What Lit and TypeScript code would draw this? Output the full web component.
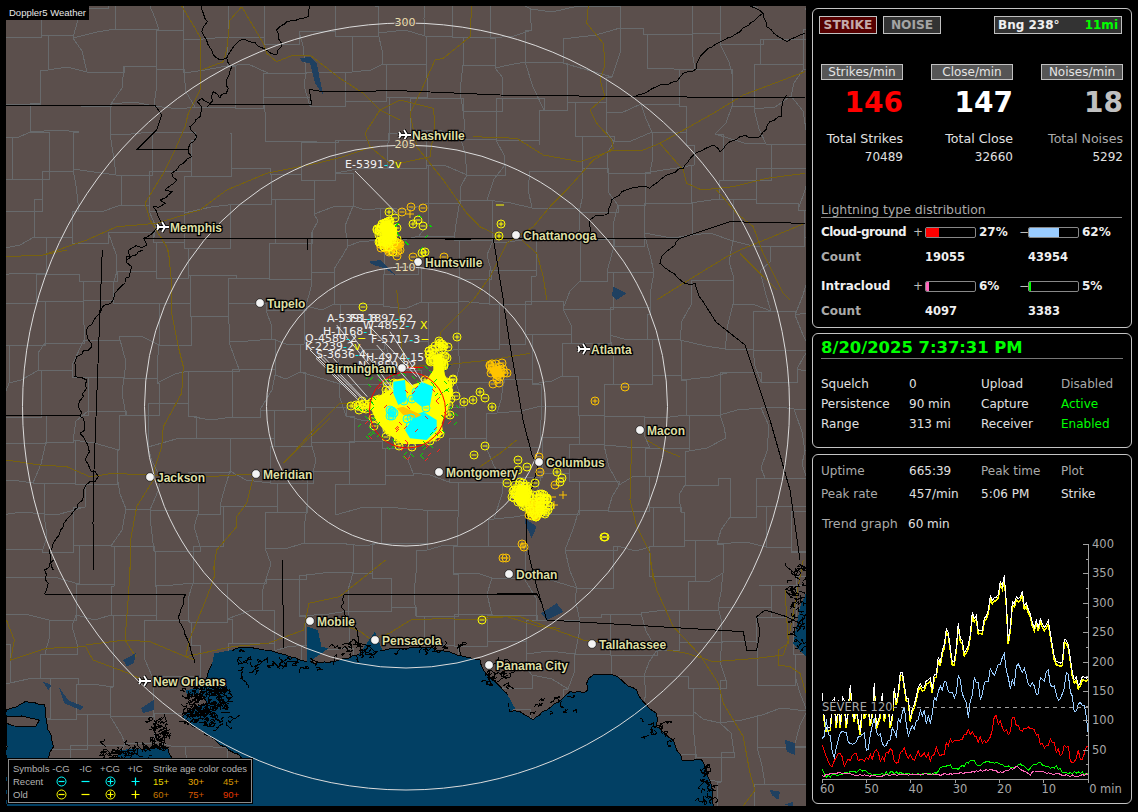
import { LitElement, html, css, svg } from 'lit';
import { customElement } from 'lit/decorators.js';

type Pt = [number, number];

// seeded random so the picture stays the same between runs
function rng(seed: number) {
  let s = seed;
  return () => {
    s = (s * 1664525 + 1013904223) % 4294967296;
    return s / 4294967296;
  };
}

// coordinates were read off crops of the screenshot, so each list keeps its crop origin and scale
function line(ox: number, oy: number, sx: number, sy: number, flat: number[], close = false) {
  let d = '';
  for (let i = 0; i < flat.length; i += 2) {
    const x = (ox + flat[i] / sx).toFixed(1);
    const y = (oy + flat[i + 1] / sy).toFixed(1);
    d += (i === 0 ? 'M' : 'L') + x + ' ' + y;
  }
  return d + (close ? 'Z' : '');
}
const z7 = (f: number[], c = false) => line(0, 0, 3, 3, f, c);
const z11 = (f: number[], c = false) => line(400, 0, 3, 3, f, c);
const z12 = (f: number[], c = false) => line(0, 250, 3, 3, f, c);
const z9 = (f: number[], c = false) => line(0, 560, 2.8, 3, f, c);
const z10 = (f: number[], c = false) => line(480, 560, 3, 3, f, c);
const z5 = (f: number[], c = false) => line(290, 290, 3, 3, f, c);
const z6 = (f: number[], c = false) => line(340, 110, 3, 3, f, c);
const z8 = (f: number[], c = false) => line(480, 440, 3, 3, f, c);

// rivers and shores: break each segment up and shake the points a little
function wig(flat: number[], amp: number, seed = 3) {
  const r = rng(seed);
  const out: number[] = [flat[0], flat[1]];
  for (let i = 2; i < flat.length; i += 2) {
    const dx = flat[i] - flat[i - 2];
    const dy = flat[i + 1] - flat[i - 1];
    const n = Math.max(1, Math.round(Math.hypot(dx, dy) / 14));
    for (let k = 1; k <= n; k++) {
      const j = k === n ? 0 : amp;
      out.push(flat[i - 2] + (dx * k) / n + (r() - 0.5) * 2 * j, flat[i - 1] + (dy * k) / n + (r() - 0.5) * 2 * j);
    }
  }
  return out;
}

const STATES = [
  z7(wig([605,18,610,40,622,65,605,95,620,120,640,165,660,180,680,175,715,125,735,118,790,145,830,165,845,130,830,90,860,65,925,50,930,18], 4)),
  z7(wig([680,175,695,200,680,240,685,265,660,295,640,275,630,310,605,295,592,305,605,320,600,350,570,380,590,410,565,445,575,470,550,490,515,520,530,540,495,570,515,575,480,600,495,610,460,620,475,650,490,680,430,715,440,735,395,745,380,780], 6)),
  z7([620,322,630,313,935,315,928,268,970,275,1200,272]),
  z7([18,316,465,316,485,345,470,390,412,448,565,448]),
  z11([0,272,300,285,700,290,1215,293]),
  z7([430,715,1200,715]),
  z11([0,715,840,715,930,685,990,665,1215,670]),
  z11([135,717,212,717]),
  z11(wig([840,715,785,770,780,790,855,850,885,850,905,900], 4)),
  'M702 300L716 322L745 345L770 420L790 490L800 560',
  z11([280,715,310,900]),
  'M503 300L510 345L523 420L532 455L538 466L526 510L527 545L530 560',
  z10([150,0,170,80,185,130,200,180,790,215,800,270,830,270,840,215,830,170,855,150,920,170,960,190]),
  z10([0,103,170,100,185,130]),
  z9(wig([965,102,955,140,1000,210,1005,250,1040,255], 4)),
  z9([965,102,1505,102]),
  z12([307,0,282,660,279,820,282,960]),
  'M307 238L307 250',
  z9([790,0,795,265]),
  z9(wig([125,102,520,102], 0).concat(wig([520,102,500,170,530,250,545,310], 4))),
  z12(wig([430,0,380,20,395,50,375,100,345,130,300,190,260,240,275,290,230,320,225,380,260,390,250,440,235,470,240,500,255,520,240,550,265,590,255,630,295,680,250,720,235,760,190,830,160,880,150,930,160,960], 7)),
  z9(wig([150,0,125,30,135,70,125,102], 5)),
  z12([18,495,240,495]),
  z11(wig([570,715,570,660,590,645,625,640,635,600,665,575,720,560,750,565,800,525,850,505,880,465,940,435,960,455,990,425,1020,410,1080,410,1110,365,1145,350,1150,300,1160,285], 4)),
  z11(wig([705,290,780,255,830,245,850,220,890,205,895,180,925,145,1020,95,1090,40,1050,18], 4)),
  z11(wig([1090,40,1100,80,1160,125,1215,100], 3)),
];

const ROADS = [
  z7([545,18,600,110,600,270,565,340,555,380,525,450,490,520,435,610,450,660,500,740,510,780]),
  z7([725,20,690,60,680,150,670,185,605,210]),
  z7([725,20,790,130,800,160,830,185,880,165,930,165,1020,235,1090,280,1140,330,1200,360]),
  z7([1200,300,1140,330,1095,400,1110,440,1170,490,1200,480]),
  z7([18,770,130,765,260,720,350,680,470,670,600,630,680,570,800,520,950,490,1030,470,1120,440]),
  z11([565,18,560,70,610,130,615,195,600,240,615,290,570,330,590,370,635,420,640,445,580,480,500,570,450,620,400,680,320,730,270,830,220,900]),
  z11([0,300,100,325,105,370,90,470,0,490]),
  z11([215,18,210,110,130,175,105,180,60,280,30,340,50,440,130,540,200,640,240,680,320,720]),
  z11([220,410,350,415,430,465,540,485,640,450,730,450,780,430,940,340,1030,285,1215,215]),
  z11([780,430,810,465,850,510,860,550,905,570,1000,560,1100,535,1215,520]),
  z11([950,570,1010,640,1060,680,1085,750,1150,880,1170,900]),
  z11([770,900,850,850,980,770,1020,750,1215,670]),
  z11([1020,760,1130,870]),
  z11([365,720,410,760,430,830,440,900]),
  z12([505,0,515,100,515,190,535,290,550,350,545,430,490,530,485,590,465,650,460,690,410,770,390,880,390,960]),
  z12([18,630,120,645,200,650,270,680,340,670,440,675,620,680,760,672]),
  z12([760,680,740,760,710,800,710,830,650,900,640,960]),
  z12([850,640,900,590,990,505]),
  z12([18,20,130,15,200,0]),
  z5([320,0,330,100,340,230,460,225,600,210,720,190]),
  z5([0,500,70,420,150,340,240,340]),
  z5([550,30,450,130,470,200]),
  z8([0,80,60,40,110,0]),
  z8([455,0,450,180,470,260,510,340,520,420]),
  z8([500,0,550,30,600,50]),
  z10([510,0,530,90,580,200,660,285,715,370,730,430,790,530,810,640,825,690,790,738]),
  z10([0,170,120,170,200,200,310,240,400,250]),
  z10([560,270,620,280,700,305,830,295,910,285,925,240,960,50,970,0]),
  z10([915,90,925,250,895,270,895,315,930,320,960,340,978,400]),
  z9([365,0,360,100,350,240,380,290]),
  z9([600,0,600,50,580,110,530,240,520,290,545,300]),
  z9([18,180,40,240,30,300,130,265,240,260,260,300,360,340,400,360]),
  z9([240,255,350,240,420,245,520,290,650,260,750,250,850,210,865,130,950,110,1080,0]),
  z9([940,185,1010,215,1040,240,1090,220,1150,180,1250,175,1300,180,1420,170,1510,200,1568,205]),
];

// the gulf, walked from the florida side round to the louisiana side and along the bottom edge
const SEA = 'M713 806' +
  z10(wig([700,738,695,680,665,600,605,600,580,540,530,500,530,460,490,425,470,390,400,345,340,345,320,370,320,395,270,395,200,450,160,480,120,455,90,455,80,400,40,360,10,330,0,300], 3, 8)).replace('M', 'L') +
  z9(wig([1280,285,1200,262,1100,265,1000,285,950,300,880,310,800,285,740,270,680,262,620,280,590,320,580,350,560,400,580,430,530,450,510,470,540,500,590,530,640,570,690,600,480,600,470,565,430,560,350,590,130,600,150,560,130,480,125,435,70,425,18,450,18,738], 3, 9)).replace('M', 'L') +
  'Z';

const LAKES = [
  z7([900,175,930,170,950,190,960,240,970,285,945,250,930,190,905,185], true),
  z6([85,455,120,450,165,495,135,475,100,465], true),
  z11([640,860,680,880,650,900,636,885], true),
  z8([135,235,170,260,155,295,135,250], true),
  z5([470,225,485,225,460,250], true),
  z9([345,300,380,280,375,310,355,320], true),
  z9([120,365,145,375,135,390], true),
  z9([165,380,190,420,235,440,225,450,180,430], true),
  z9([395,445,430,420,430,450,400,460], true),
  z10([183,160,230,130,250,155,200,180], true),
  z10([915,540,945,550,945,585,920,575], true),
  z10([870,690,900,695,895,720,875,705], true),
  z10([910,735,940,725,940,738], true),
];

const BAYS = [
  z9([860,200,890,210,900,260,920,265,860,310], true),
  z9([1050,215,1070,270,1000,290], true),
  z9([520,390,560,385,555,405,525,408], true),
  z9([600,280,650,270,620,320,590,330], true),
  z9([330,570,410,565,420,600,330,600], true),
  z10([960,140,978,100,978,290,940,250], true),
  z10([80,400,105,445,90,455], true),
  z10([200,450,270,415,215,455], true),
];

// the sliver of louisiana that sits in the water left of the legend
const ISLAND = z9([18,470,60,468,110,480,100,500,40,498,18,490], true);

function countyGrid() {
  const r = rng(11);
  const cols = 22, rows = 24, w = 38, h = 34;
  const v: Pt[][] = [];
  for (let j = 0; j <= rows; j++) {
    v[j] = [];
    for (let i = 0; i <= cols; i++) {
      v[j][i] = [2 + i * w + (r() - 0.5) * 20, 2 + j * h + (r() - 0.5) * 16];
    }
  }
  let d = '';
  const seg = (a: Pt, b: Pt) => {
    if (r() < 0.12) return;
    // county edges are mostly straight, some follow a creek
    if (r() < 0.35) {
      const mx = (a[0] + b[0]) / 2 + (r() - 0.5) * 10;
      const my = (a[1] + b[1]) / 2 + (r() - 0.5) * 10;
      d += `M${a[0].toFixed(0)} ${a[1].toFixed(0)}L${mx.toFixed(0)} ${my.toFixed(0)}L${b[0].toFixed(0)} ${b[1].toFixed(0)}`;
    } else {
      d += `M${a[0].toFixed(0)} ${a[1].toFixed(0)}L${b[0].toFixed(0)} ${a[1].toFixed(0)}L${b[0].toFixed(0)} ${b[1].toFixed(0)}`;
    }
  };
  for (let j = 0; j <= rows; j++) {
    for (let i = 0; i <= cols; i++) {
      if (i < cols) seg(v[j][i], v[j][i + 1]);
      if (j < rows) seg(v[j][i], v[j + 1][i]);
    }
  }
  return d;
}

// black marsh scribble along the delta and the gulf shore
function marsh() {
  const r = rng(5);
  const zones: [number, number, number, number, number][] = [
    [207, 705, 22, 20, 150],
    [159, 735, 9, 15, 50],
    [125, 752, 28, 6, 40],
    [245, 665, 6, 14, 8],
    [280, 665, 40, 3, 24],
    [355, 650, 22, 8, 24],
    [430, 647, 30, 3, 16],
    [495, 675, 16, 12, 24],
    [797, 610, 7, 46, 50],
    [708, 785, 6, 20, 24],
    [655, 735, 14, 14, 12],
    [560, 705, 30, 10, 12],
  ];
  let d = '';
  for (const [cx, cy, rx, ry, n] of zones) {
    for (let i = 0; i < n; i++) {
      let x = cx + (r() - 0.5) * 2 * rx;
      let y = cy + (r() - 0.5) * 2 * ry;
      d += `M${x.toFixed(0)} ${y.toFixed(0)}`;
      for (let k = 0; k < 5; k++) {
        x += (r() - 0.5) * 7;
        y += (r() - 0.5) * 6;
        d += `L${x.toFixed(0)} ${y.toFixed(0)}`;
      }
    }
  }
  return d;
}

const YELLOW = '#ffff00';
const AMBER = '#ffc400';
const CYAN = '#00ffff';
const marks: Record<string, string> = { [AMBER]: '', [YELLOW]: '', [CYAN]: '' };

function mark(color: string, x: number, y: number, sign: string, ring = true) {
  const r = 4;
  let d = ring ? `M${x - r} ${y}a${r} ${r} 0 1 0 ${2 * r} 0a${r} ${r} 0 1 0 ${-2 * r} 0` : '';
  const a = ring ? 2.5 : 4;
  d += `M${x - a} ${y}h${2 * a}`;
  if (sign === '+') d += `M${x} ${y - a}v${2 * a}`;
  marks[color] += d;
}

function scatter(seed: number, n: number, cx: number, cy: number, rx: number, ry: number, color: string) {
  const r = rng(seed);
  for (let i = 0; i < n; i++) {
    const a = r() * Math.PI * 2;
    const k = Math.sqrt(r());
    mark(color, Math.round(cx + Math.cos(a) * k * rx), Math.round(cy + Math.sin(a) * k * ry), r() < 0.5 ? '+' : '-');
  }
}

function zMarks(ox: number, oy: number, color: string, list: [number, number, string][]) {
  for (const [x, y, s] of list) mark(color, Math.round(ox + x / 3), Math.round(oy + y / 3), s);
}

// huntsville group
scatter(21, 50, 387, 233, 11, 15, YELLOW);
scatter(22, 24, 391, 247, 13, 6, AMBER);
zMarks(340, 110, YELLOW, [[148,307,'+'],[165,325,'-'],[218,343,'+'],[235,330,'-'],[250,347,'-'],[484,343,'+'],[478,379,'+'],[255,425,'+'],[245,430,'+'],[160,425,'-']]);
zMarks(340, 110, AMBER, [[185,307,'-'],[212,290,'-'],[248,295,'-'],[218,440,'-'],[312,440,'-'],[170,437,'-']]);
mark(YELLOW, 500, 205, '-', false);
mark(AMBER, 410, 214, '+', false);

// birmingham group
scatter(31, 90, 410, 412, 40, 36, YELLOW);
scatter(32, 30, 438, 355, 10, 14, YELLOW);
scatter(33, 22, 443, 390, 14, 18, YELLOW);
scatter(34, 12, 366, 406, 12, 5, YELLOW);
zMarks(290, 290, YELLOW, [[500,140,'+'],[448,153,'+'],[475,172,'-'],[605,352,'+'],[570,307,'+'],[585,325,'-'],[523,337,'+'],[550,330,'+'],[498,318,'-'],[584,467,'-'],[553,495,'-'],[685,510,'-'],[220,52,'-'],[183,347,'+'],[205,348,'-']]);
scatter(36, 10, 410, 408, 26, 24, CYAN);
scatter(37, 6, 392, 413, 10, 4, CYAN);

// east of birmingham
scatter(41, 14, 497, 371, 10, 8, AMBER);
zMarks(290, 290, AMBER, [[635,218,'-'],[650,248,'-'],[610,282,'-'],[628,278,'-']]);

// columbus group
scatter(51, 44, 521, 492, 8, 11, YELLOW);
scatter(52, 44, 537, 505, 14, 12, YELLOW);
scatter(53, 16, 535, 510, 9, 7, AMBER);
zMarks(480, 440, YELLOW, [[80,130,'-'],[115,90,'-'],[140,80,'-'],[232,95,'+'],[245,115,'-'],[240,125,'-'],[165,130,'-'],[95,170,'-'],[373,292,'-']]);
zMarks(480, 440, AMBER, [[178,50,'-'],[180,95,'-'],[225,135,'-'],[133,320,'+'],[77,355,'-']]);
mark(AMBER, 563, 495, '+', false);
mark(AMBER, 554, 505, '+', false);
mark(AMBER, 552, 497, '-', false);

// stragglers
mark(AMBER, 625, 387, '-');
mark(AMBER, 595, 401, '+');
mark(YELLOW, 605, 537, '-');
mark(AMBER, 522, 544, '+');
mark(AMBER, 503, 558, '-');
mark(YELLOW, 482, 620, '-');

function ticks(seed: number, n: number, cx: number, cy: number, r0: number, r1: number) {
  const r = rng(seed);
  let d = '';
  for (let i = 0; i < n; i++) {
    const a = r() * Math.PI * 2;
    const k = r0 + r() * (r1 - r0);
    const x = Math.round(cx + Math.cos(a) * k);
    const y = Math.round(cy + Math.sin(a) * k * 0.95);
    d += `M${x} ${y}l3 ${r() < 0.5 ? -3 : 3}`;
  }
  return d;
}

const GREEN_TICKS = ticks(61, 70, 406, 410, 32, 52) +
  z6([165,350,175,340]) + z6([235,315,245,322]) + z6([268,345,275,352]) + z6([255,385,265,375]) + z6([240,420,250,410]) + z6([195,395,205,405]) + z6([170,365,178,378]);
const RED_TICKS = ticks(62, 36, 410, 420, 10, 46);

const LEADERS = [
  z6([45,183,170,310]),
  z5([85,195,215,325]), z5([100,200,225,330]), z5([130,205,232,320]), z5([78,205,205,330]),
  z5([140,105,300,300]), z5([240,110,380,260]), z5([300,125,400,280]),
  z5([185,135,310,300]), z5([260,165,370,290]), z5([60,180,200,320]),
];

const STRIKE_LABELS: { x: number; y: number; text: string; end: string; tail?: string }[] = [
  { x: 345, y: 168, text: 'E-5391', end: '2', tail: 'v' },
  { x: 327, y: 322, text: 'A-5391', end: '8' },
  { x: 350, y: 322, text: 'F3-1897', end: '62' },
  { x: 363, y: 329, text: 'W-4852', end: '7', tail: ' X' },
  { x: 323, y: 335, text: 'H-1168', end: '1' },
  { x: 305, y: 342, text: 'Q-4589', end: '2', tail: '−' },
  { x: 371, y: 343, text: 'F-5717', end: '3', tail: '−' },
  { x: 305, y: 350, text: 'K-2239', end: '2', tail: 'v' },
  { x: 316, y: 358, text: 'S-3636', end: '4' },
  { x: 366, y: 361, text: 'H-4974', end: '15' },
  { x: 358, y: 369, text: 'N-4859', end: '82' },
];

const CITIES: { name: string; x: number; y: number; tx: number; plane?: boolean }[] = [
  { name: 'Nashville', x: 405, y: 135, tx: 412, plane: true },
  { name: 'Memphis', x: 163, y: 227, tx: 170, plane: true },
  { name: 'Chattanooga', x: 516, y: 235, tx: 523 },
  { name: 'Huntsville', x: 418, y: 262, tx: 425 },
  { name: 'Tupelo', x: 260, y: 303, tx: 267 },
  { name: 'Atlanta', x: 584, y: 349, tx: 591, plane: true },
  { name: 'Birmingham', x: 402, y: 368, tx: 326 },
  { name: 'Macon', x: 640, y: 430, tx: 647 },
  { name: 'Columbus', x: 539, y: 462, tx: 546 },
  { name: 'Montgomery', x: 439, y: 472, tx: 446 },
  { name: 'Jackson', x: 150, y: 477, tx: 157 },
  { name: 'Meridian', x: 256, y: 474, tx: 263 },
  { name: 'Dothan', x: 509, y: 574, tx: 516 },
  { name: 'Mobile', x: 310, y: 621, tx: 317 },
  { name: 'Pensacola', x: 375, y: 640, tx: 382 },
  { name: 'Panama City', x: 489, y: 665, tx: 496 },
  { name: 'Tallahassee', x: 592, y: 644, tx: 599 },
  { name: 'New Orleans', x: 145, y: 681, tx: 153, plane: true },
];

const COUNTIES = countyGrid();
const MARSH = marsh();

@customElement('strike-map')
class StrikeMap extends LitElement {
  static styles = css`
    :host {
      display: block;
      width: 800px;
      height: 800px;
      position: relative;
      overflow: hidden;
      background: #5b4f4c;
    }
    svg {
      display: block;
    }
    .crisp {
      shape-rendering: crispEdges;
    }
    .ln {
      fill: none;
      stroke-width: 1;
    }
    .sea {
      fill: #024064;
      stroke: #000;
    }
    .strike-label {
      font: 11px 'DejaVu Sans', sans-serif;
      fill: #f2f2f2;
    }
    .city {
      font: bold 12px 'Liberation Sans', sans-serif;
      fill: #dedea4;
      stroke: #000;
      stroke-width: 2.6px;
      paint-order: stroke;
    }
    .ring-label {
      font: 11px 'DejaVu Sans', sans-serif;
      fill: #ecdfae;
      stroke: #5b4f4c;
      stroke-width: 2px;
      paint-order: stroke;
      text-anchor: middle;
    }
    .title {
      position: absolute;
      left: 0;
      top: 0;
      width: 83px;
      height: 14px;
      background: #000;
      color: #e8e8e8;
      font: 9.5px/14px 'Liberation Sans', sans-serif;
      padding-left: 3px;
      box-sizing: border-box;
      white-space: nowrap;
    }
    .legend {
      position: absolute;
      left: 2px;
      top: 753px;
      width: 244px;
      height: 44px;
      box-sizing: border-box;
      background: #000;
      border: 1px solid #8c8c8c;
      outline: 1px solid #000;
      padding: 2px 0 0 4px;
      color: #b4b4b4;
      font: 9.5px/13px 'Liberation Sans', sans-serif;
      display: grid;
      grid-template-columns: 35px 26px 23px 26px 24px 6px 35px 35px 30px;
      grid-auto-rows: 13px;
      align-items: center;
    }
    .legend .mid {
      text-align: center;
    }
    .legend svg {
      margin: 0 auto;
    }
    .legend .wide {
      grid-column: 7 / span 3;
      white-space: nowrap;
    }
  `;

  render() {
    const rings = [139.5, 261.5, 383.5];
    return html`
      <svg width="800" height="800" viewBox="6 6 800 800">
        <rect x="6" y="6" width="800" height="800" fill="#5b4f4c"></rect>
        <g class="crisp">
          <path class="ln" d=${COUNTIES} stroke="#686a6c"></path>
          <path class="ln" d=${ROADS.join('')} stroke="#78620f"></path>
          <path class="sea" d=${SEA}></path>
          <path d=${ISLAND} fill="#5b4f4c" stroke="#000"></path>
          <path d=${BAYS.join('')} fill="#024064" stroke="none"></path>
          <path d=${LAKES.join('')} fill="#1f4060" stroke="none"></path>
          <path class="ln" d=${STATES.join('')} stroke="#000"></path>
          <path class="ln" d=${MARSH} stroke="#000"></path>
        </g>
        ${rings.map((r) => svg`<circle cx="406" cy="406.5" r=${r} fill="none" stroke="#dcdcdc"></circle>`)}
        ${this.renderStrikes()}
        <path class="ln" d=${LEADERS.join('')} stroke="#d8d8d8"></path>
        ${STRIKE_LABELS.map((l) => svg`
          <text class="strike-label" x=${l.x} y=${l.y}>${l.text}<tspan fill="#00ffff">-</tspan>${l.end}<tspan fill="#ffff00">${l.tail ?? ''}</tspan></text>
        `)}
        ${CITIES.map((c) => this.renderCity(c))}
        <text class="ring-label" x="405" y="26">300</text>
        <text class="ring-label" x="405" y="148">205</text>
        <text class="ring-label" x="405" y="271">110</text>
      </svg>
      <div class="title">Doppler5 Weather</div>
      ${this.renderLegend()}
    `;
  }

  renderStrikes() {
    return svg`
      <path d=${z6([118,345,150,335,172,352,168,392,132,398], true)} fill=${YELLOW}></path>
      <path d=${z6([135,398,185,398,185,416,135,416], true)} fill=${AMBER}></path>
      <path d=${z5([245,330,300,300,310,270,340,265,365,285,410,270,430,240,430,195,455,190,465,255,490,300,475,350,455,400,460,430,435,450,400,462,340,462,290,430,260,395,240,350], true)} fill=${YELLOW}></path>
      <path d=${z5([595,235,630,225,645,260,610,265], true)} fill=${AMBER}></path>
      <path d=${z8([110,140,145,140,150,190,120,200], true)} fill=${YELLOW}></path>
      <path d=${z8([145,185,195,165,190,220,160,240,145,220], true)} fill="#ffe000"></path>
      <path class="ln" d=${marks[AMBER]} stroke=${AMBER}></path>
      <path class="ln" d=${marks[YELLOW]} stroke=${YELLOW}></path>
      <path d=${z5([310,275,345,270,350,330,325,345,310,310], true)} fill=${CYAN}></path>
      <path d=${z5([365,310,395,275,430,290,420,345,395,350,370,330], true)} fill=${CYAN}></path>
      <path d=${z5([345,420,375,375,400,365,440,390,440,420,410,450,360,445], true)} fill=${CYAN}></path>
      <path d=${z5([320,355,340,350,395,375,375,385,340,375], true)} fill=${AMBER}></path>
      <path class="ln" d=${marks[CYAN]} stroke=${CYAN}></path>
      <g class="crisp">
        <path class="ln" d=${GREEN_TICKS} stroke="#00e000"></path>
        <path class="ln" d=${RED_TICKS} stroke="#ff2020"></path>
        <path class="ln" d=${z5([320,235,400,232])} stroke="#ff0000"></path>
      </g>
      <circle cx="407.5" cy="410" r="38" fill="none" stroke="#ff0000"></circle>
    `;
  }

  renderCity(c: { name: string; x: number; y: number; tx: number; plane?: boolean }) {
    const plane = 'M-6 0H6M2 0L-1 -5M2 0L-1 5M-4 0L-6 -3M-4 0L-6 3';
    return svg`
      ${c.plane
        ? svg`<g transform="translate(${c.x} ${c.y})" fill="none">
            <path d=${plane} stroke="#000" stroke-width="3.6"></path>
            <path d=${plane} stroke="#fff" stroke-width="1.8"></path>
          </g>`
        : svg`<circle cx=${c.x} cy=${c.y} r="4.3" fill="#f4f4f4" stroke="#000" stroke-width="0.6"></circle>`}
      <text class="city" x=${c.tx} y=${c.y + 5}>${c.name}</text>
    `;
  }

  renderSymbol(color: string, sign: string, ring: boolean) {
    return html`<svg width="13" height="13" viewBox="-6.5 -6.5 13 13">
      ${ring ? svg`<circle r="4.5" fill="none" stroke=${color}></circle>` : ''}
      <path d=${sign === '+' ? (ring ? 'M-3 0H3M0 -3V3' : 'M-4 0H4M0 -4V4') : (ring ? 'M-3 0H3' : 'M-4 0H4')} stroke=${color} fill="none" stroke-width="1.2"></path>
    </svg>`;
  }

  renderLegend() {
    const row = (label: string, color: string, ages: [string, string][]) => html`
      <span>${label}</span>
      <span class="mid">${this.renderSymbol(color, '-', true)}</span>
      <span class="mid">${this.renderSymbol(color, '-', false)}</span>
      <span class="mid">${this.renderSymbol(color, '+', true)}</span>
      <span class="mid">${this.renderSymbol(color, '+', false)}</span>
      <span></span>
      ${ages.map(([t, c]) => html`<span style="color:${c}">${t}</span>`)}
    `;
    return html`
      <div class="legend">
        <span>Symbols</span>
        <span class="mid">-CG</span>
        <span class="mid">-IC</span>
        <span class="mid">+CG</span>
        <span class="mid">+IC</span>
        <span></span>
        <span class="wide">Strike age color codes</span>
        ${row('Recent', CYAN, [['15+', '#e8d800'], ['30+', '#e8a800'], ['45+', '#d89800']])}
        ${row('Old', YELLOW, [['60+', '#c87800'], ['75+', '#d85800'], ['90+', '#e83800']])}
      </div>
    `;
  }
}

const toX = (z: number) => 810 + z / 3;
const toY = (z: number) => 450 + z / 3;

function trace(env: number[], seed: number, amp: (x: number) => number, step = 6) {
  const r = rng(seed);
  let d = '';
  let j = 0;
  let flip = 1;
  for (let x = 37; x <= 835; x += step) {
    while (j < env.length - 4 && env[j + 2] < x) j += 2;
    const t = Math.min(1, Math.max(0, (x - env[j]) / (env[j + 2] - env[j])));
    flip = r() < 0.6 ? -flip : flip;
    const y = Math.min(982, env[j + 1] + (env[j + 3] - env[j + 1]) * t + flip * r() * amp(x));
    d += `${d ? 'L' : 'M'}${toX(x).toFixed(1)} ${toY(y).toFixed(1)}`;
  }
  return d;
}

const TOTAL = [37,780,100,775,200,765,240,765,262,740,275,655,300,790,340,690,370,700,385,640,410,535,430,630,445,520,470,615,490,475,515,575,530,475,570,410,585,385,595,555,610,455,630,412,680,530,710,510,745,655,770,560,795,685,835,680];
const BLUE = [37,880,50,810,70,920,100,830,130,880,160,850,170,900,190,810,215,880,260,840,280,770,295,840,330,790,360,810,385,700,410,710,430,750,445,690,475,780,495,670,515,740,540,670,575,630,585,600,597,720,630,640,680,720,710,660,740,745,775,670,795,780,810,735,835,830];
const RED = [37,895,65,940,85,900,105,945,130,915,150,930,200,905,215,930,240,890,260,935,280,890,300,925,340,905,360,925,380,895,395,930,410,875,450,870,485,835,510,870,540,870,555,795,595,855,610,800,630,825,680,850,700,880,725,870,750,905,770,880,785,935,805,900,820,930,835,880];
const GREEN = [37,960,50,975,100,970,160,955,180,970,280,965,330,970,380,965,405,940,440,955,490,925,510,950,525,930,580,940,600,950,630,940,655,955,680,935,720,950,740,945,760,965,835,968];
const PINK = [37,975,90,965,180,975,280,970,400,970,470,965,540,955,570,965,620,948,660,970,680,958,720,968,800,975,835,970];

const totalAmp = (x: number) => (x < 262 ? 75 : 24);
const LINE_WHITE = trace(TOTAL, 71, totalAmp);
const LINE_YELLOW = trace(TOTAL.map((v, i) => (i % 2 ? v + 10 : v)), 71, totalAmp);
const LINE_BLUE = trace(BLUE, 72, () => 22);
const LINE_RED = trace(RED, 73, () => 14);
const LINE_GREEN = trace(GREEN, 74, () => 5);
const LINE_PINK = trace(PINK, 75, () => 3);

@customElement('trend-chart')
class TrendChart extends LitElement {
  static styles = css`
    :host {
      display: block;
    }
    svg {
      display: block;
    }
    text {
      font: 11.5px 'DejaVu Sans', sans-serif;
      fill: #a8a8a8;
    }
    .crisp {
      shape-rendering: crispEdges;
    }
  `;

  render() {
    const top = 543;
    const bottom = 778;
    const unit = (bottom - top) / 400;
    const yTicks: number[] = [];
    for (let v = 0; v <= 400; v += 25) yTicks.push(v);
    const xTicks = [0, 10, 20, 30, 40, 50, 60];
    return html`
      <svg width="318" height="269" viewBox="813 533 318 269">
        <g class="crisp" fill="none">
          <path d=${LINE_YELLOW} stroke="#ffff00" stroke-width="1.5"></path>
          <path d=${LINE_WHITE} stroke="#fff"></path>
          <path d=${LINE_BLUE} stroke="#99ccff"></path>
          <path d=${LINE_RED} stroke="#ff0000"></path>
          <path d=${LINE_GREEN} stroke="#00ff00"></path>
          <path d=${LINE_PINK} stroke="#ff66bb"></path>
          <path d="M893 706H1088" stroke="#a0a0a0" stroke-dasharray="4 4"></path>
          <path d="M1088 ${top}V${bottom}H822" stroke="#a0a0a0"></path>
          ${yTicks.map((v) => svg`<path d="M${v % 50 ? 1086 : 1083} ${(bottom - v * unit).toFixed(0)}H1088" stroke="#a0a0a0"></path>`)}
          ${xTicks.map((m) => svg`<path d="M${1088 - m * 4.43} 778v4" stroke="#a0a0a0"></path>`)}
        </g>
        <rect x="820" y="700" width="73" height="13" fill="#000"></rect>
        <text x="822" y="710">SEVERE 120</text>
        ${yTicks.filter((v) => v > 0 && v % 50 === 0).map((v) => svg`<text x="1092" y=${bottom - v * unit + 4}>${v}</text>`)}
        ${xTicks.map((m) => svg`<text x=${1093 - m * 4.43} y="792" text-anchor="middle">${m}</text>`)}
        <text x="1100" y="792">min</text>
      </svg>
    `;
  }
}

@customElement('app-root')
class AppRoot extends LitElement {
  static styles = css`
    :host {
      display: block;
      width: 1138px;
      height: 812px;
      background: #000;
      font: 12px/18px 'DejaVu Sans', sans-serif;
      color: #e0e0e0;
      overflow: hidden;
    }
    .page {
      display: flex;
      gap: 6px;
      padding: 6px 0 0 6px;
    }
    .side {
      width: 320px;
      margin-top: 2px;
      display: flex;
      flex-direction: column;
      gap: 5px;
    }
    .panel {
      box-sizing: border-box;
      border: 1px solid #c4c4c4;
      border-radius: 6px;
    }
    .panel-a {
      height: 320px;
      padding: 7px 9px 0 6px;
    }
    .panel-b {
      height: 115px;
      padding: 3px 8px 0;
    }
    .panel-c {
      height: 350px;
      margin-top: 1px;
      padding: 5px 0 0 8px;
    }
    .buttons {
      display: flex;
      gap: 6px;
      height: 18px;
    }
    .btn {
      box-sizing: border-box;
      width: 58px;
      height: 18px;
      border: 1px solid #c0c0c0;
      font: bold 12.2px/16px 'DejaVu Sans', sans-serif;
      text-align: center;
    }
    .btn.strike {
      background: #560000;
      color: #c4aaaa;
    }
    .btn.noise {
      background: #333;
      color: #a4a4a4;
    }
    .bng {
      box-sizing: border-box;
      margin-left: auto;
      width: 128px;
      height: 18px;
      border: 1px solid #c0c0c0;
      background: #333;
      padding: 0 3px 0 3px;
      display: flex;
      justify-content: space-between;
      font: bold 12px/16px 'DejaVu Sans', sans-serif;
      color: #f0f0f0;
    }
    .green {
      color: #00ff00;
    }
    .stats {
      display: grid;
      grid-template-columns: repeat(3, 82px);
      gap: 28px;
      margin: 30px 0 0 2px;
    }
    .stat {
      text-align: right;
    }
    .stat-head {
      box-sizing: border-box;
      height: 16px;
      border: 1px solid #c0c0c0;
      background: #555;
      color: #e4e4e4;
      font-size: 12px;
      line-height: 14px;
      text-align: center;
    }
    .big {
      height: 32px;
      margin: 7px 0 11px;
      font: bold 28px/32px 'DejaVu Sans', sans-serif;
    }
    .total {
      font-size: 12.6px;
    }
    .red {
      color: #ff0000;
    }
    .white {
      color: #fff;
    }
    .silver {
      color: #c0c0c0;
    }
    .dim {
      color: #aaa;
    }
    .dist-title {
      box-sizing: border-box;
      height: 16px;
      margin: 36px 0 0 2px;
      border-bottom: 1px solid #888;
      color: #aaa;
      font-size: 12.45px;
      line-height: 16px;
    }
    .dist-row {
      display: grid;
      grid-template-columns: 92px 12px 54px 40px 9px 54px 40px;
      height: 24px;
      align-items: center;
      margin-left: 2px;
      font-weight: bold;
      color: #f0f0f0;
    }
    .dist-row.first {
      margin-top: 2px;
    }
    .dist-row.count {
      margin-top: 1px;
    }
    .dist-row.second {
      margin-top: 5px;
    }
    .cg {
      letter-spacing: -0.55px;
      white-space: nowrap;
    }
    .num {
      font-size: 11.5px;
    }
    .sign {
      font-weight: normal;
      color: #bbb;
    }
    .label-dim {
      color: #aaa;
    }
    .bar {
      box-sizing: border-box;
      width: 51px;
      height: 11px;
      border: 1px solid #888;
      border-radius: 2px;
      overflow: hidden;
    }
    .bar div {
      height: 100%;
    }
    .date {
      box-sizing: border-box;
      height: 22px;
      border-bottom: 1px solid #777;
      font: bold 16.4px/21px 'DejaVu Sans', sans-serif;
      color: #00ff00;
    }
    .info {
      display: grid;
      grid-template-columns: 88px 72px 80px auto;
      grid-auto-rows: 20px;
      line-height: 20px;
      margin-top: 15px;
    }
    .info.tight {
      grid-auto-rows: 23px;
      line-height: 23px;
      margin-top: 0;
    }
    .trend {
      display: grid;
      grid-template-columns: 86px auto;
      margin: 8px 0 0 1px;
      line-height: 20px;
    }
    .trend .dim {
      font-size: 12.7px;
    }
    trend-chart {
      margin-left: -8px;
    }
  `;

  renderBar(pct: number, color: string) {
    return html`<div class="bar"><div style="width:${pct}%;background:${color}"></div></div>`;
  }

  render() {
    return html`
      <div class="page">
        <strike-map></strike-map>
        <div class="side">
          <div class="panel panel-a">
            <div class="buttons">
              <div class="btn strike">STRIKE</div>
              <div class="btn noise">NOISE</div>
              <div class="bng"><span>Bng 238°</span><span class="green">11mi</span></div>
            </div>
            <div class="stats">
              <div class="stat">
                <div class="stat-head">Strikes/min</div>
                <div class="big red">146</div>
                <div class="total">Total Strikes</div>
                <div>70489</div>
              </div>
              <div class="stat">
                <div class="stat-head">Close/min</div>
                <div class="big white">147</div>
                <div class="total">Total Close</div>
                <div>32660</div>
              </div>
              <div class="stat">
                <div class="stat-head">Noises/min</div>
                <div class="big silver">18</div>
                <div class="total dim">Total Noises</div>
                <div>5292</div>
              </div>
            </div>
            <div class="dist-title">Lightning type distribution</div>
            <div class="dist-row first">
              <span class="cg">Cloud-ground</span><span class="sign">+</span>${this.renderBar(27, '#ff0000')}<span>27%</span>
              <span class="sign">−</span>${this.renderBar(62, '#99ccff')}<span>62%</span>
            </div>
            <div class="dist-row count">
              <span class="label-dim">Count</span><span></span><span class="num">19055</span><span></span><span></span><span class="num">43954</span>
            </div>
            <div class="dist-row second">
              <span>Intracloud</span><span class="sign">+</span>${this.renderBar(7, '#ff66bb')}<span>6%</span>
              <span class="sign">−</span>${this.renderBar(5, '#00ff00')}<span>5%</span>
            </div>
            <div class="dist-row count">
              <span class="label-dim">Count</span><span></span><span class="num">4097</span><span></span><span></span><span class="num">3383</span>
            </div>
          </div>
          <div class="panel panel-b">
            <div class="date">8/20/2025 7:37:31 PM</div>
            <div class="info">
              <span>Squelch</span><span>0</span><span>Upload</span><span class="dim">Disabled</span>
              <span>Persistence</span><span>90 min</span><span>Capture</span><span class="green">Active</span>
              <span>Range</span><span>313 mi</span><span>Receiver</span><span class="green">Enabled</span>
            </div>
          </div>
          <div class="panel panel-c">
            <div class="info tight">
              <span class="dim">Uptime</span><span>665:39</span><span class="dim">Peak time</span><span class="dim">Plot</span>
              <span class="dim">Peak rate</span><span>457/min</span><span>5:06 PM</span><span>Strike</span>
            </div>
            <div class="trend"><span class="dim">Trend graph</span><span>60 min</span></div>
            <trend-chart></trend-chart>
          </div>
        </div>
      </div>
    `;
  }
}
